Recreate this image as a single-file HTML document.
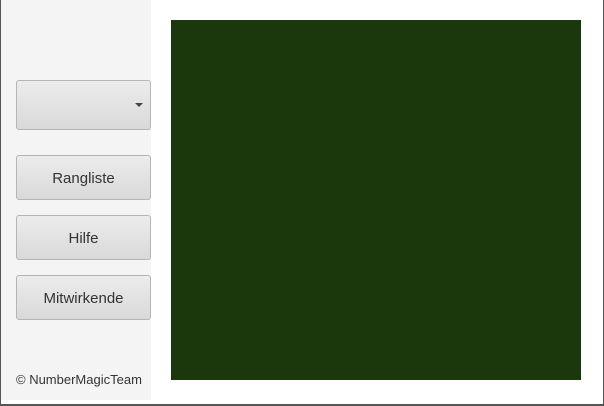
<!DOCTYPE html>
<html><head><meta charset="utf-8"><style>
html,body{margin:0;padding:0;width:604px;height:406px;overflow:hidden;background:#fff;font-family:"Liberation Sans",sans-serif}
.frame{position:absolute;left:0;top:0;border-left:1px solid #555;border-right:1px solid #555;border-bottom:2px solid #555;box-sizing:content-box;width:602px;height:404px}
.side{position:absolute;left:1px;top:0;width:150px;height:400px;background:#f4f4f4}
.btn{position:absolute;left:16px;width:135px;border:1px solid #b5b5b5;border-radius:3px;background:linear-gradient(#ececec,#d9d9d9);color:#333;font-size:15px;text-align:center;box-sizing:border-box}
.green{position:absolute;left:171px;top:20px;width:410px;height:360px;background:#1a380b}
.copy{position:absolute;left:16px;top:372px;font-size:13px;color:#333}
</style></head><body>
<div class="frame"></div>
<div class="side"></div>
<div class="btn" style="top:80px;height:50px"><span style="position:absolute;right:7px;top:22px;width:0;height:0;border-left:4px solid transparent;border-right:4px solid transparent;border-top:4px solid #444"></span></div>
<div class="btn" style="top:155px;height:45px;line-height:45px">Rangliste</div>
<div class="btn" style="top:215px;height:45px;line-height:45px">Hilfe</div>
<div class="btn" style="top:275px;height:45px;line-height:45px">Mitwirkende</div>
<div class="copy">© NumberMagicTeam</div>
<div class="green"></div>
</body></html>
